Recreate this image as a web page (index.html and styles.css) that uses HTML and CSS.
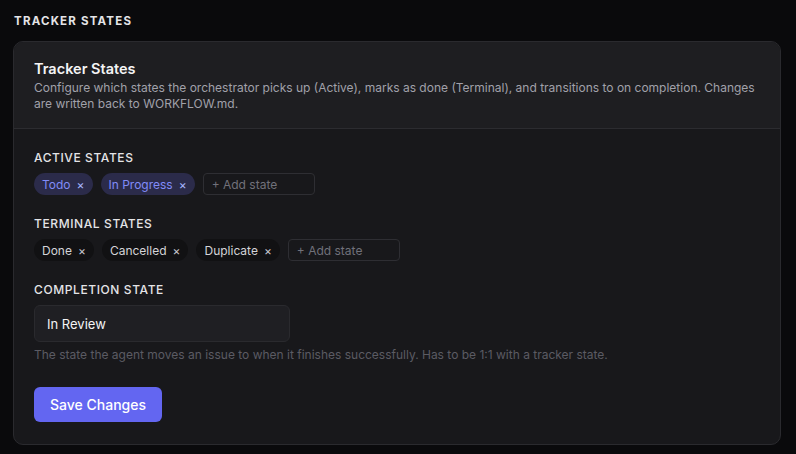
FILE: index.html
```html
<!DOCTYPE html>
<html lang="en">
  <head>
    <meta charset="UTF-8" />
    <meta name="viewport" content="width=device-width, initial-scale=1.0" />
    <title>Tracker States</title>
    <link rel="stylesheet" href="styles.css">
  </head>
  <body>
    <h2 class="section-title">Tracker States</h2>

    <div class="card">
      <div class="card-header">
        <h3>Tracker States</h3>
        <p>
          Configure which states the orchestrator picks up (Active), marks as done (Terminal), and transitions to on completion. Changes are written back to WORKFLOW.md.
        </p>
      </div>

      <div class="card-body">
        <div class="field">
          <label>Active States</label>
          <div class="chips">
            <span class="chip active">Todo <span class="x">×</span></span>
            <span class="chip active">In Progress <span class="x">×</span></span>
            <input class="add-state" type="text" placeholder="+ Add state" />
          </div>
        </div>

        <div class="field">
          <label>Terminal States</label>
          <div class="chips">
            <span class="chip">Done <span class="x">×</span></span>
            <span class="chip">Cancelled <span class="x">×</span></span>
            <span class="chip">Duplicate <span class="x">×</span></span>
            <input class="add-state" type="text" placeholder="+ Add state" />
          </div>
        </div>

        <div class="field last">
          <label for="completion">Completion State</label>
          <input id="completion" class="text-input" type="text" value="In Review" />
          <div class="hint">
            The state the agent moves an issue to when it finishes successfully. Has to be 1:1 with a tracker state.
          </div>
        </div>

        <button class="save-btn">Save Changes</button>
      </div>
    </div>
  </body>
</html>
```

FILE: styles.css
```css
body {
  margin: 0;
  padding: 13px 15px 10px 13px;
  background-color: #0a0a0c;
  font-family: Inter, "Noto Sans", sans-serif;
  color: #e4e4e7;
}
.section-title {
  margin: 0 0 12px 1px;
  font-size: 11.5px;
  font-weight: 700;
  line-height: 16px;
  letter-spacing: 1.2px;
  text-transform: uppercase;
  color: #e4e4e7;
}
.card {
  background: #18181b;
  border: 1px solid #2a2a2e;
  border-radius: 10px;
  overflow: hidden;
}
.card-header {
  background: #1e1e21;
  padding: 17px 20px 16px;
  border-bottom: 1px solid #2c2c30;
}
.card-header h3 {
  margin: 0 0 2px;
  font-size: 14.5px;
  font-weight: 600;
  line-height: 19px;
  color: #f4f4f5;
}
.card-header p {
  margin: 0;
  font-size: 12px;
  line-height: 16px;
  color: #a1a1aa;
}
.card-body {
  padding: 21px 20px 22px;
}
.field {
  margin-bottom: 21px;
}
.field.last {
  margin-bottom: 25px;
}
label {
  display: block;
  margin-bottom: 8px;
  font-size: 12px;
  font-weight: 500;
  line-height: 15px;
  letter-spacing: 0.6px;
  text-transform: uppercase;
  color: #e4e4e7;
}
.chips {
  display: flex;
  align-items: center;
  gap: 8px;
}
.chip {
  display: inline-flex;
  align-items: center;
  gap: 6px;
  height: 22px;
  padding: 0 8px;
  border-radius: 11px;
  background: #111113;
  color: #d4d4d8;
  font-size: 12px;
  font-weight: 400;
}
.chip .x {
  font-size: 12px;
  color: #c4c4cc;
}
.chip.active {
  background: #2b2b4a;
  color: #818cf8;
}
.chip.active .x {
  color: #a5b4fc;
}
.add-state {
  box-sizing: border-box;
  width: 112px;
  height: 22px;
  padding: 0 8px;
  background: transparent;
  border: 1px solid #2e2e33;
  border-radius: 4px;
  font-family: inherit;
  font-size: 12px;
  color: #d4d4d8;
}
.add-state::placeholder {
  color: #71717a;
}
.text-input {
  box-sizing: border-box;
  display: block;
  width: 256px;
  height: 37px;
  padding: 0 12px;
  background: #1f1f23;
  border: 1px solid #2a2a2e;
  border-radius: 6px;
  font-family: inherit;
  font-size: 13px;
  color: #f4f4f5;
}
.hint {
  margin-top: 5px;
  font-size: 12px;
  line-height: 15px;
  color: #5b5b63;
}
.save-btn {
  display: block;
  height: 35px;
  padding: 0 16px;
  background-color: #6366f1;
  color: white;
  border: none;
  border-radius: 6px;
  font-family: inherit;
  font-size: 14px;
  font-weight: 500;
  cursor: pointer;
}
.save-btn:hover {
  background-color: #4f46e5;
}
```
